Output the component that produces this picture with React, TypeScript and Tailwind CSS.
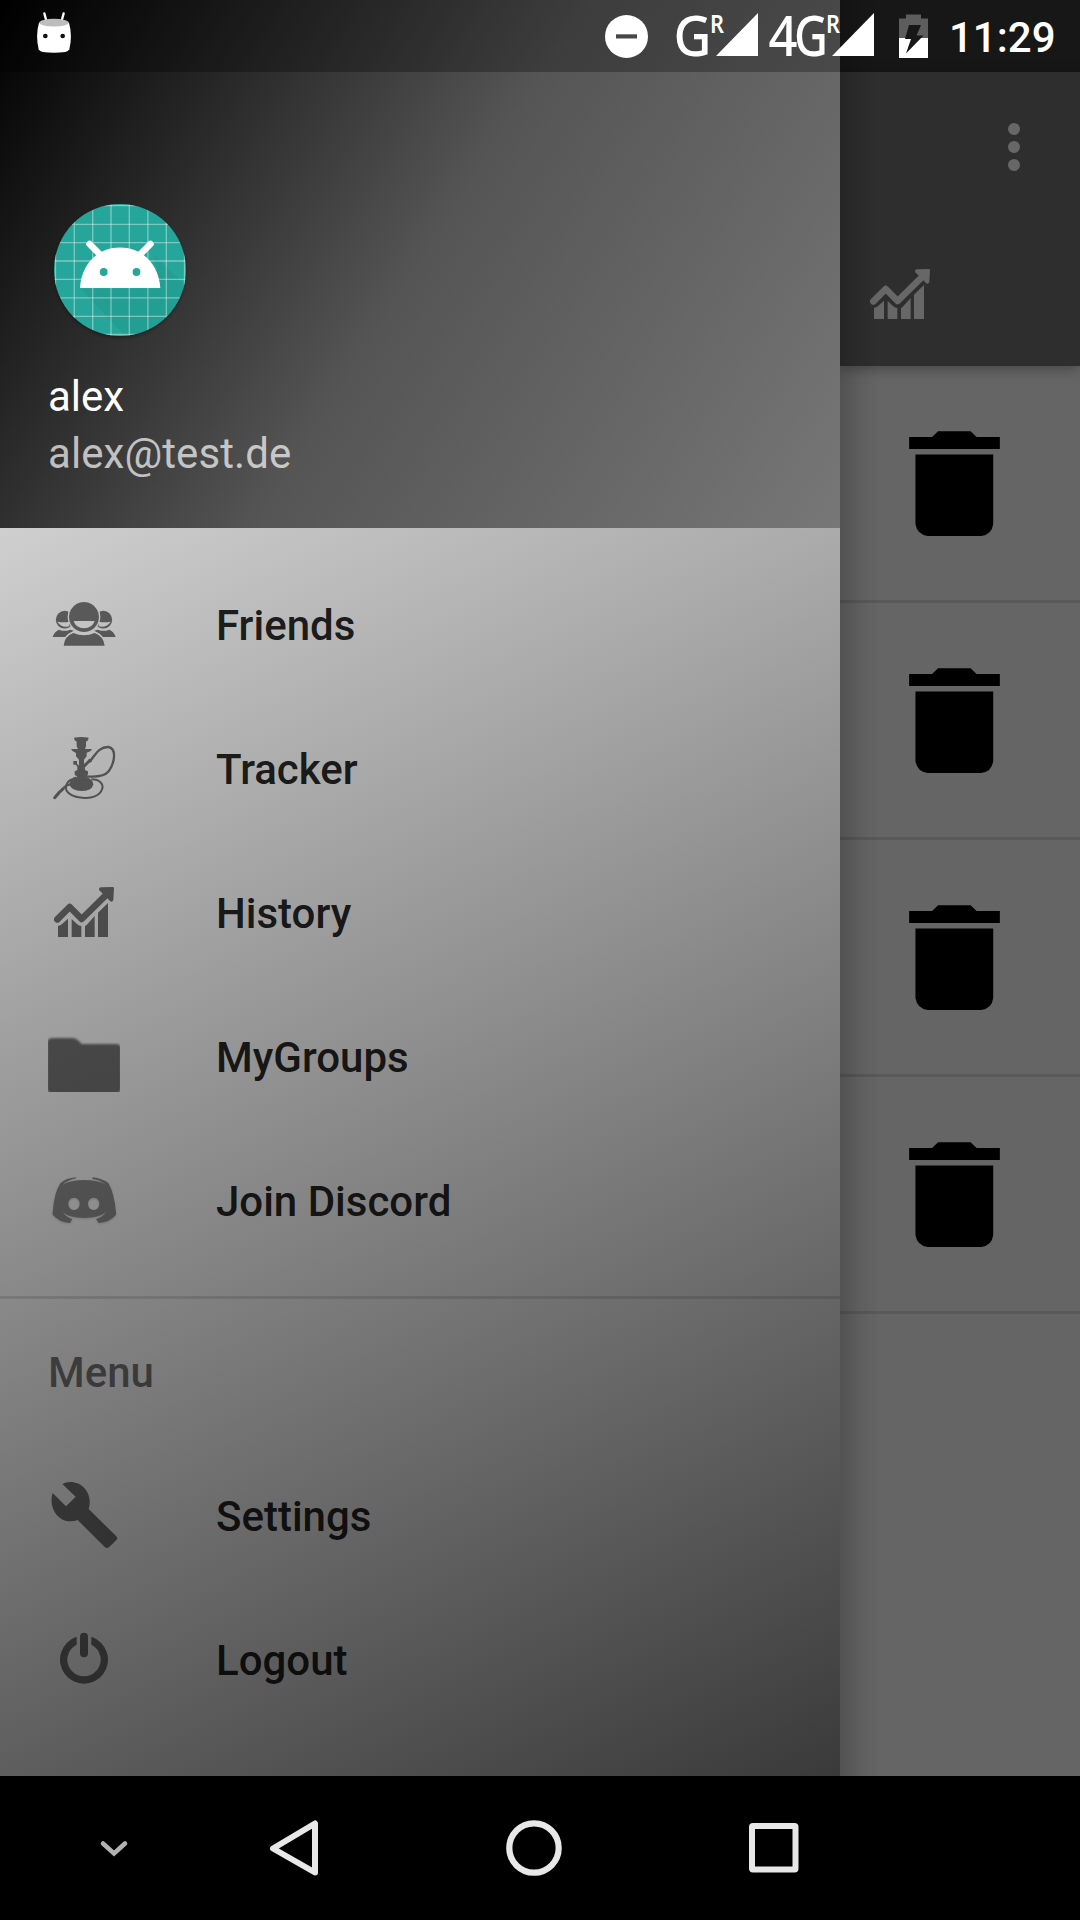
import React from "react";

function GrowthChart() {
  return (
    <svg viewBox="0 0 180 150" className="h-[50px] w-[60px]" fill="currentColor">
      <path d="M10 97 L47 60 L83 96 L158 22" fill="none" stroke="currentColor" strokeWidth="20" strokeLinecap="round" strokeLinejoin="round" />
      <path d="M140 1 L176 0 Q180 0 180 4 L178 40 Q174 47 168 42 L136 10 Q133 3 140 1 Z" />
      <path d="M12 117 Q19 116 24 111 L42 95 V150 H12 Z" />
      <path d="M53 96 L69 111 Q75 117 82 117 V150 H53 Z" />
      <path d="M93 117 Q97 115 101 110 L122 87 V150 H93 Z" />
      <path d="M132 77 L162 48 V150 H132 Z" />
    </svg>
  );
}

function Friends() {
  return (
    <svg viewBox="54 24 216 216" className="size-[72px]" fill="currentColor">
      <defs>
        <mask id="friend-sides" maskUnits="userSpaceOnUse" x="54" y="24" width="216" height="216">
          <rect x="54" y="24" width="216" height="216" fill="white" />
          <circle cx="162" cy="110" r="49" fill="black" />
          <path d="M82 125 Q100 128 118 125 V139 Q94 144 82 125Z" fill="black" />
          <path d="M242 125 Q224 128 206 125 V139 Q230 144 242 125Z" fill="black" />
          <path d="M95 197 Q100 166 130 154 H194 Q224 166 229 197Z" fill="black" />
        </mask>
      </defs>
      <g mask="url(#friend-sides)">
        <circle cx="104" cy="119" r="26.500" />
        <circle cx="220" cy="119" r="26.500" />
        <path d="M68 171 Q73 155 87 149 Q104 156 120 149 L132 152 Q116 159 106 171Z" />
        <path d="M257 171 Q252 155 238 149 Q220 156 204 149 L192 152 Q208 159 218 171Z" />
      </g>
      <path fillRule="evenodd" d="M162 66 A45 45 0 1 1 161.900 66Z M131 123 Q137 145 162 145 Q187 145 194 123Z" />
      <path d="M101 197 Q103 169 130 159 Q162 173 194 159 Q221 169 224 197Z" />
    </svg>
  );
}

function Hookah() {
  return (
    <svg viewBox="54 456 216 216" className="size-[72px]" fill="currentColor">
      <path d="M132 473 Q154 469 176 473 L174 481 L168 485 V499 L165 507 H186 Q183 515 170 518 V529 L162 539 V552 L174 541 L177 536 L187 538 L185 545 L177 550 L164 563 L166 571 L174 574 V583 L167 590 Q190 597 190 614 Q184 633 154 633 Q124 633 118 613 Q119 598 142 590 L134 584 V574 L142 570 V561 L138 554 H130 V543 H141 V551 L147 557 V539 L138 529 V519 Q126 515 123 507 H144 L140 499 V485 L134 481 Z" />
      <g fill="none" stroke="currentColor">
        <path strokeWidth="7" d="M181 542 C196 525 207 500 235 501 C262 506 253 551 236 574 C222 591 198 592 168 589" />
        <path strokeWidth="6" d="M184 598 C210 598 222 613 216 628 C210 648 184 656 157 653 C125 651 104 636 108 618 C110 604 124 598 138 592" />
        <path strokeWidth="7" d="M121 613 Q107 615 96 629" />
        <path strokeWidth="9" strokeLinecap="round" d="M99 627 L87 638 L74 653" />
      </g>
    </svg>
  );
}

function Folder() {
  return (
    <svg viewBox="0 0 72 72" className="size-[72px]" fill="currentColor">
      <path className="blur-[0.8px]" d="M-1 22 Q0 18 5 18 H24 Q28 18 31 21 L33.500 24 H67 Q73 24 73 28 V69 Q72 74 67 74 H5 Q0 74 -1 69 Z" />
    </svg>
  );
}

function Discord() {
  return (
    <svg viewBox="54 42 216 216" className="size-[72px] opacity-80 drop-shadow-[0_1px_1px_rgba(0,0,0,0.35)]" fill="currentColor">
      <path
        fillRule="evenodd"
        d="M91 100 Q107 84 138 82 V85 Q113 90 98 104 Q122 90 163 90 Q204 90 228 104 Q213 91 187 87 L188 82 Q216 85 235 99 Q253 129 258 187 V194 Q239 217 206 219 L198 207 Q216 202 228 187 Q206 204 163 204 Q119 204 98 187 Q110 202 127 207 L120 219 Q88 217 68 194 V187 Q72 129 91 100Z M132 143 A17 18.500 0 1 0 132.100 143Z M191 143 A17 18.500 0 1 0 191.100 143Z"
      />
    </svg>
  );
}

function Wrench() {
  return (
    <svg viewBox="54 57 216 216" className="size-[72px]" fill="currentColor">
      <path d="M97 72 L137 110 L108 139 L68 99 C55 138 80 184 122 184 Q134 184 143 180 L225 262 Q231 267 237 262 L260 239 Q264 234 259 229 L176 147 C189 107 163 66 121 66 Q108 66 97 72Z" />
    </svg>
  );
}

function Power() {
  return (
    <svg viewBox="54 489 216 216" className="size-[72px]" fill="currentColor">
      <path d="M140 530.400 A72 72 0 1 0 184 530.400 V554 A50 50 0 1 1 140 554 Z" />
      <rect x="150" y="518" width="24" height="74" rx="12" />
    </svg>
  );
}

function Avatar() {
  const lines = [-64.500, -45.700, -27.300, -9, 9.300, 27.900, 46.300, 64.500];
  return (
    <svg viewBox="-72 -72 144 144" className="size-36">
      <defs>
        <clipPath id="avatar-disc">
          <circle r="66" />
        </clipPath>
      </defs>
      <circle r="66" cy="2" fill="#000" opacity="0.3" className="blur-[1.5px]" />
      <circle r="66" fill="#26a69a" />
      <g clipPath="url(#avatar-disc)">
        <path d="M-39 19 L5 66 H80 V30 L34 -15 L40 19Z" fill="#1f8f84" opacity="0.35" />
        {lines.map((p) => (
          <path key={p} d={`M${p} -66V66M-66 ${p}H66`} stroke="#fff" strokeOpacity="0.4" strokeWidth="1.300" />
        ))}
      </g>
      <path d="M-40 18 C-39 -4 -24 -22.500 0 -22.500 C24 -22.500 39 -4 40.300 18 Z" fill="#fff" />
      <path d="M-30.500 -26 L-19 -14.500 M30.500 -26 L19 -14.500" stroke="#fff" strokeWidth="6.500" strokeLinecap="round" />
      <circle cx="-16.300" cy="2" r="3.900" fill="#26a69a" />
      <circle cx="16.500" cy="2" r="3.900" fill="#26a69a" />
    </svg>
  );
}

function Trash() {
  return (
    <svg viewBox="236 212 273 316" className="ml-[68.500px] h-[105px] w-[91px]" fill="#000">
      <path d="M236 230 H305 L323 213 H421 L439 230 H509 V266 H236Z" />
      <path d="M255 283 H489 V492 Q485 524 453 528 H292 Q260 524 255 492Z" />
    </svg>
  );
}

function NavItem({ icon, label }: { icon: React.ReactNode; label: string }) {
  return (
    <li className="flex h-36 items-center pl-12">
      <span className="text-black opacity-[0.54]">{icon}</span>
      <span className="ml-24 pt-[3px] text-[42px] leading-[49px] font-medium text-black/[0.87]">{label}</span>
    </li>
  );
}

function SignalBars() {
  return (
    <>
      <path d="M5 56 L47 13 V56Z" />
      <text x="-1" y="32.500" fontWeight="600" fontSize="24.500" textLength="14" lengthAdjust="spacingAndGlyphs">R</text>
    </>
  );
}

function StatusBar() {
  return (
    <div className="absolute inset-x-0 top-0 z-20 flex h-[72px] items-start text-white">
      <svg viewBox="0 0 108 216" className="ml-9 h-[72px] w-9">
        <path d="M25 40 L32 66 M83 40 L76 66" stroke="#fff" strokeWidth="7" strokeLinecap="round" />
        <path d="M9 68 Q54 50 99 68 Q110 105 100 148 Q97 154 88 156 Q54 161 20 156 Q11 154 8 148 Q-2 105 9 68Z" fill="#fff" />
        <ellipse cx="54" cy="68" rx="44" ry="11.500" fill="#bdbdbd" />
        <circle cx="28" cy="108" r="7" fill="#111" />
        <circle cx="80" cy="108" r="7" fill="#111" />
      </svg>
      <div className="ml-auto flex items-start">
        <svg viewBox="0 0 43 72" className="mr-[24px] h-[72px] w-[43px]">
          <circle cx="21.500" cy="36.500" r="21.500" fill="#fff" />
          <rect x="11" y="34.300" width="21" height="4.200" fill="#484848" />
        </svg>
        <svg viewBox="0 0 87 72" className="h-[72px] w-[87px] overflow-visible" fill="#fff" fontFamily="Noto Sans">
          <text x="1.500" y="56" fontSize="56.500" fontWeight="500" textLength="38" lengthAdjust="spacingAndGlyphs">G</text>
          <g transform="translate(39 0)">
            <SignalBars />
          </g>
        </svg>
        <svg viewBox="0 0 107 72" className="ml-[8px] h-[72px] w-[107px] overflow-visible" fill="#fff" fontFamily="Noto Sans">
          <text x="1.500" y="56" fontSize="56.500" fontWeight="500" textLength="29" lengthAdjust="spacingAndGlyphs">4</text>
          <text x="27" y="56" fontSize="56.500" fontWeight="500" textLength="34" lengthAdjust="spacingAndGlyphs">G</text>
          <g transform="translate(60 0)">
            <SignalBars />
          </g>
        </svg>
        <svg viewBox="0 0 29 72" className="ml-[25px] h-[72px] w-[29px]">
          <path d="M0 18.500 H7 V14.500 H22 V18.500 H29 V38 H0Z" fill="#5d5d5d" />
          <path d="M0 38 H29 V58 H0Z" fill="#fff" />
          <path d="M10 25 H22 L17.500 35.500 H24.500 L7 53.500 L12 39 H6Z" fill="#171717" />
        </svg>
        <time className="mr-[27px] ml-[21px] w-[104px] pt-[13px] text-[42px] leading-[49px] font-medium whitespace-nowrap">11:29</time>
      </div>
    </div>
  );
}

export default function App() {
  return (
    <div className="relative flex h-[1920px] w-[1080px] flex-col overflow-hidden bg-black font-['Roboto']">
      <StatusBar />
      <div className="flex h-[1776px]">
        <aside className="relative z-10 flex w-[840px] flex-col bg-[linear-gradient(154.69deg,#ffffff_0%,#9c9c9c_50%,#3a3a3a_100%)]">
          <div className="absolute inset-x-0 top-0 h-[72px] bg-black/[0.28]" />
          <header className="flex h-[528px] flex-col bg-[linear-gradient(122.15deg,#000000_0%,#555555_50%,#777777_100%)] pt-[197.500px] pl-12">
            <Avatar />
            <p className="mt-[30.500px] text-[42px] leading-[49px] text-white">alex</p>
            <p className="mt-2 text-[42px] leading-[49px] tracking-[0.08px] text-white/70">alex@test.de</p>
          </header>
          <ul className="py-6">
            <NavItem icon={<Friends />} label="Friends" />
            <NavItem icon={<Hookah />} label="Tracker" />
            <NavItem icon={<span className="flex size-[72px] items-center justify-center"><GrowthChart /></span>} label="History" />
            <NavItem icon={<Folder />} label="MyGroups" />
            <NavItem icon={<Discord />} label="Join Discord" />
          </ul>
          <div className="h-[3px] shrink-0 bg-black/[0.12]" />
          <h2 className="flex h-36 items-center pt-[3px] pl-12 text-[42px] leading-[49px] font-medium text-black/[0.54]">Menu</h2>
          <ul>
            <NavItem icon={<Wrench />} label="Settings" />
            <NavItem icon={<Power />} label="Logout" />
          </ul>
        </aside>
        <main className="relative flex w-60 flex-col bg-[#656565]">
          <div className="h-[72px] bg-[#171717]" />
          <div className="relative z-[1] flex h-[294px] flex-col bg-[#2e2e2e] text-[#676767] shadow-[0_2px_13px_rgba(0,0,0,0.35)]">
            <div className="flex h-[150px] justify-end pt-[51px] pr-[60px]">
              <div className="flex flex-col gap-[6px]">
                <i className="size-3 rounded-full bg-[#676767]" />
                <i className="size-3 rounded-full bg-[#676767]" />
                <i className="size-3 rounded-full bg-[#676767]" />
              </div>
            </div>
            <div className="flex h-36 items-start pt-[47px] pl-[30px]">
              <GrowthChart />
            </div>
          </div>
          {[0, 1, 2, 3].map((row) => (
            <div key={row} className="h-[237px] border-b-[3px] border-[#595959] pt-[65px]">
              <Trash />
            </div>
          ))}
          <div className="absolute inset-y-0 left-0 z-[2] w-10 bg-[linear-gradient(90deg,rgba(0,0,0,0.2),rgba(0,0,0,0.07)_50%,transparent)]" />
        </main>
      </div>
      <nav className="flex h-36 bg-black pl-[54px]">
        <svg viewBox="0 0 120 144" className="h-36 w-[120px]">
          <path d="M49 67.500 L60 77.500 L71 67.500" fill="none" stroke="#b2b2b2" strokeWidth="4.500" strokeLinecap="round" />
        </svg>
        <svg viewBox="0 0 240 144" className="h-36 w-60">
          <path d="M141 47.500 V96.500 L99 72.500 Z" fill="none" stroke="#e8e8e8" strokeWidth="6" strokeLinejoin="round" />
        </svg>
        <svg viewBox="0 0 240 144" className="h-36 w-60">
          <circle cx="120" cy="72" r="24.700" fill="none" stroke="#e8e8e8" strokeWidth="6.200" />
        </svg>
        <svg viewBox="0 0 240 144" className="h-36 w-60">
          <rect x="98" y="50" width="43.500" height="43.500" rx="1" fill="none" stroke="#e8e8e8" strokeWidth="6" />
        </svg>
      </nav>
    </div>
  );
}
